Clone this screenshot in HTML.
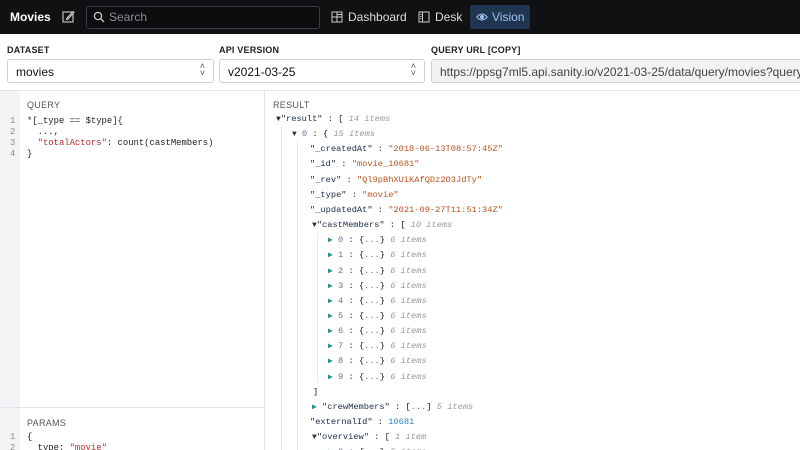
<!DOCTYPE html>
<html><head><style>
*{box-sizing:border-box;margin:0;padding:0}
html{overflow:hidden;width:800px;height:450px}
body{width:800px;height:450px;overflow:hidden;background:#fff;font-family:"Liberation Sans",sans-serif;position:relative}
.top{position:absolute;left:0;top:0;width:800px;height:34px;background:#101112;color:#fff}
.top .t{position:absolute;top:10px;font-size:12px}
.lbl{position:absolute;top:45px;font-size:9px;font-weight:bold;color:#222;letter-spacing:.2px}
.sel{position:absolute;top:59px;height:24px;border:1px solid #ccd0d6;border-radius:3px;font-size:12px;padding:5px 0 0 8px;color:#111}
.sel .ar{position:absolute;right:8px;top:3px;font-size:9px;line-height:7px;color:#555}
.mono{font-family:"Liberation Mono","DejaVu Sans Mono",monospace}
.q{position:absolute;font-size:8.9px;line-height:11px;color:#222}
.r{position:absolute;font-size:8.7px;white-space:pre;color:#222}
.k{color:#1e2d45}.s{color:#b8531f}.g{color:#999;font-style:italic}.n{color:#2a7fc4}.i{color:#6a6f9a}
.tri{color:#2a8f8a;font-size:8px}
.tri2{color:#333;font-size:8px}
</style></head><body>
<div class="top">
<div class="t" style="left:10px;font-weight:bold">Movies</div>
<svg style="position:absolute;left:62px;top:10px" width="13" height="13" viewBox="0 0 13 13" fill="none" stroke="#ccc" stroke-width="1.1"><rect x="1" y="2" width="10" height="10"/><path d="M5 8 L11 1.5 L12 2.5 L6 9 L4.5 9.5Z" fill="#101112"/></svg>
<div style="position:absolute;left:86px;top:6px;width:234px;height:23px;border:1px solid #3a3d42;border-radius:3px;background:#0c0d0e"></div>
<svg style="position:absolute;left:93px;top:11px" width="12" height="12" viewBox="0 0 12 12" fill="none" stroke="#ccc" stroke-width="1.3"><circle cx="5" cy="5" r="3.6"/><path d="M7.7 7.7 L11 11"/></svg>
<div class="t" style="left:109px;color:#8a8d92">Search</div>
<svg style="position:absolute;left:331px;top:11px" width="12" height="12" viewBox="0 0 12 12" fill="none" stroke="#ccc" stroke-width="1"><rect x="1" y="1" width="10" height="10"/><path d="M6 1V11M1 6H11M6 3.5H11"/></svg>
<div class="t" style="left:348px;color:#ddd">Dashboard</div>
<svg style="position:absolute;left:418px;top:11px" width="12" height="12" viewBox="0 0 12 12" fill="none" stroke="#ccc" stroke-width="1"><rect x="1" y="1" width="10" height="10"/><path d="M4.5 1V11M2.3 3.5H3.5M2.3 5.5H3.5M2.3 7.5H3.5"/></svg>
<div class="t" style="left:435px;color:#ddd">Desk</div>
<div style="position:absolute;left:470px;top:5px;width:60px;height:24px;background:#1f3550;border-radius:2px"></div>
<svg style="position:absolute;left:476px;top:11px" width="12" height="12" viewBox="0 0 12 12" fill="none" stroke="#9cc3ef" stroke-width="1"><path d="M0.8 6 Q6 0 11.2 6 Q6 12 0.8 6Z"/><circle cx="6" cy="6" r="1.6" fill="#9cc3ef"/></svg>
<div class="t" style="left:492px;color:#9cc3ef">Vision</div>
</div>
<div class="lbl" style="left:7px">DATASET</div>
<div class="lbl" style="left:219px">API VERSION</div>
<div class="lbl" style="left:431px">QUERY URL [COPY]</div>
<div class="sel" style="left:7px;width:207px">movies<div class="ar">˄<br>˅</div></div>
<div class="sel" style="left:219px;width:206px">v2021-03-25<div class="ar">˄<br>˅</div></div>
<div class="sel" style="left:431px;width:380px;background:#f1f2f4;color:#444;white-space:nowrap;overflow:hidden">https://ppsg7ml5.api.sanity.io/v2021-03-25/data/query/movies?query=*%5</div>
<div style="position:absolute;left:0;top:90px;width:800px;height:1px;background:#e2e4e8"></div>
<div style="position:absolute;left:0;top:91px;width:20px;height:359px;background:#f3f4f6"></div>
<div style="position:absolute;left:264px;top:91px;width:1px;height:359px;background:#e2e4e8"></div>
<div style="position:absolute;left:0;top:407px;width:264px;height:1px;background:#e2e4e8"></div>
<div style="position:absolute;left:27px;top:100px;font-size:9px;color:#555;letter-spacing:.3px">QUERY</div>
<div style="position:absolute;left:27px;top:418px;font-size:9px;color:#555;letter-spacing:.3px">PARAMS</div>
<div style="position:absolute;left:273px;top:100px;font-size:9px;color:#555;letter-spacing:.3px">RESULT</div>
<div class="q mono" style="left:10px;top:116px;color:#888">1<br>2<br>3<br>4</div>
<div class="q mono" style="left:27px;top:116px;white-space:pre">*[_type == $type]{
  ...,
  <span style="color:#b72d2d">"totalActors"</span>: count(castMembers)
}</div>
<div class="q mono" style="left:10px;top:432px;color:#888">1<br>2</div>
<div class="q mono" style="left:27px;top:432px;white-space:pre">{
  type: <span style="color:#b72d2d">"movie"</span></div>
<div style="position:absolute;left:281px;top:127px;width:1px;height:323px;background:#e6e8eb"></div>
<div style="position:absolute;left:297px;top:142px;width:1px;height:308px;background:#e6e8eb"></div>
<div style="position:absolute;left:317px;top:233px;width:1px;height:150px;background:#e6e8eb"></div>
<div id="res"></div>
<script>
var rows=[
[276,'<span class="tri2">▼</span><span class="k">"result"</span> : [ <span class="g">14 items</span>'],
[292,'<span class="tri2">▼</span> <span class="i">0</span> : { <span class="g">15 items</span>'],
[310,'<span class="k">"_createdAt"</span> : <span class="s">"2018-06-13T08:57:45Z"</span>'],
[310,'<span class="k">"_id"</span> : <span class="s">"movie_10681"</span>'],
[310,'<span class="k">"_rev"</span> : <span class="s">"Ql9pBhXUiKAfQDz2O3JdTy"</span>'],
[310,'<span class="k">"_type"</span> : <span class="s">"movie"</span>'],
[310,'<span class="k">"_updatedAt"</span> : <span class="s">"2021-09-27T11:51:34Z"</span>'],
[312,'<span class="tri2">▼</span><span class="k">"castMembers"</span> : [ <span class="g">10 items</span>']];
for(var i=0;i<10;i++)rows.push([328,'<span class="tri">▶</span> <span class="i">'+i+'</span> : {<span class="s">...</span>} <span class="g">6 items</span>']);
rows.push([313,']']);
rows.push([312,'<span class="tri">▶</span> <span class="k">"crewMembers"</span> : [<span class="s">...</span>] <span class="g">5 items</span>']);
rows.push([310,'<span class="k">"externalId"</span> : <span class="n">10681</span>']);
rows.push([312,'<span class="tri2">▼</span><span class="k">"overview"</span> : [ <span class="g">1 item</span>']);
rows.push([328,'<span class="tri">▶</span> <span class="i">0</span> : {<span class="s">...</span>} <span class="g">5 items</span>']);
var h='';for(var j=0;j<rows.length;j++)h+='<div class="r mono" style="left:'+rows[j][0]+'px;top:'+(114+j*15.15)+'px">'+rows[j][1]+'</div>';
document.getElementById('res').innerHTML=h;
</script>
</body></html>
